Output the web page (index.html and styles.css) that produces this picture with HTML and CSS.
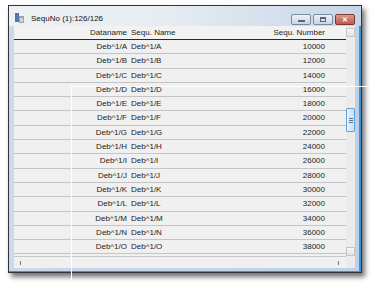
FILE: index.html
```html
<!DOCTYPE html>
<html lang="en">

<head>
    <meta charset="UTF-8">
    <title>SequNo (1):126/126</title>
    <link rel="stylesheet" href="styles.css">
</head>

<body>
    <!-- window -->
    <div class="window">
        <div class="titlebar">
            <svg class="app-icon" width="9" height="10" viewBox="0 0 9 10">
                <rect x="0" y="0" width="4" height="9" fill="#5577aa"/>
                <rect x="4" y="3" width="5" height="7" fill="#9aa3ad"/>
                <rect x="5" y="5" width="3" height="4" fill="#cfd5db"/>
            </svg>
            <span class="title">SequNo (1):126/126</span>
            <div class="buttons">
                <div class="btn btn-min"><span></span></div>
                <div class="btn btn-max"><span></span></div>
                <div class="btn btn-close">&#x2715;</div>
            </div>
        </div>

        <div class="client">
            <div class="main">
                <div class="table">
                    <div class="row head">
                        <div class="c1">Dataname</div>
                        <div class="c2">Sequ. Name</div>
                        <div class="c3">Sequ. Number</div>
                    </div>
                    <div class="row"><div class="c1">Deb^1/A</div><div class="c2">Deb^1/A</div><div class="c3">10000</div></div>
                    <div class="row"><div class="c1">Deb^1/B</div><div class="c2">Deb^1/B</div><div class="c3">12000</div></div>
                    <div class="row"><div class="c1">Deb^1/C</div><div class="c2">Deb^1/C</div><div class="c3">14000</div></div>
                    <div class="row"><div class="c1">Deb^1/D</div><div class="c2">Deb^1/D</div><div class="c3">16000</div></div>
                    <div class="row"><div class="c1">Deb^1/E</div><div class="c2">Deb^1/E</div><div class="c3">18000</div></div>
                    <div class="row"><div class="c1">Deb^1/F</div><div class="c2">Deb^1/F</div><div class="c3">20000</div></div>
                    <div class="row"><div class="c1">Deb^1/G</div><div class="c2">Deb^1/G</div><div class="c3">22000</div></div>
                    <div class="row"><div class="c1">Deb^1/H</div><div class="c2">Deb^1/H</div><div class="c3">24000</div></div>
                    <div class="row"><div class="c1">Deb^1/I</div><div class="c2">Deb^1/I</div><div class="c3">26000</div></div>
                    <div class="row"><div class="c1">Deb^1/J</div><div class="c2">Deb^1/J</div><div class="c3">28000</div></div>
                    <div class="row"><div class="c1">Deb^1/K</div><div class="c2">Deb^1/K</div><div class="c3">30000</div></div>
                    <div class="row"><div class="c1">Deb^1/L</div><div class="c2">Deb^1/L</div><div class="c3">32000</div></div>
                    <div class="row"><div class="c1">Deb^1/M</div><div class="c2">Deb^1/M</div><div class="c3">34000</div></div>
                    <div class="row"><div class="c1">Deb^1/N</div><div class="c2">Deb^1/N</div><div class="c3">36000</div></div>
                    <div class="row"><div class="c1">Deb^1/O</div><div class="c2">Deb^1/O</div><div class="c3">38000</div></div>
                </div>
                <!-- horizontal scrollbar -->
                <div class="hscroll">
                    <span class="tick"></span>
                    <span class="tick"></span>
                </div>
            </div>

            <!-- vertical scrollbar -->
            <div class="vscroll">
                <div class="arrow"></div>
                <div class="track">
                    <div class="thumb"><span></span></div>
                </div>
                <div class="arrow"></div>
                <div class="grip"></div>
            </div>
        </div>
    </div>

    <!-- crosshair over everything -->
    <div class="cross-v"></div>
    <div class="cross-h"></div>
</body>

</html>
```

FILE: styles.css
```css
* {
    margin: 0;
    padding: 0;
    box-sizing: border-box;
}

body {
    background-color: #ffffff;
    font-family: "Liberation Sans", Arial, sans-serif;
    font-size: 8px;
    color: #222;
    position: relative;
    width: 388px;
    height: 288px;
    overflow: hidden;
}

/* outer window */
.window {
    width: 354px;
    height: 268px;
    margin: 5px 0 0 8px;
    border: 1px solid #2c3440;
    background: linear-gradient(to right, #cbd9e9, #bcd1e8);
    box-shadow: inset -2px -1px 0 #3f93d2, 3px 4px 5px rgba(0, 0, 0, 0.55);
    display: flex;
    flex-direction: column;
}

.titlebar {
    height: 20px;
    display: flex;
    align-items: center;
    padding: 0 6px 0 6px;
    background: linear-gradient(to right, #eef1f4 0%, #e6ecf2 45%, #c6d6e8 100%);
}

.app-icon {
    margin-top: 4px;
}

.title {
    margin: 4px 0 0 7px;
    color: #111;
}

.buttons {
    margin-left: auto;
    margin-top: 7px;
    display: flex;
    gap: 2px;
}

.btn {
    width: 20px;
    height: 11px;
    border: 1px solid #7a8a9f;
    border-radius: 2px;
    background: linear-gradient(#eef2f7, #c9d5e3);
    display: flex;
    align-items: center;
    justify-content: center;
}

.btn-min span {
    width: 7px;
    height: 2px;
    margin-top: 3px;
    background-color: #5a6678;
}

.btn-max span {
    width: 6px;
    height: 5px;
    border: 1px solid #5a6678;
    border-top-width: 2px;
}

.btn-close {
    width: 20px;
    border-color: #7a3a34;
    background: linear-gradient(#dd9a8c, #c4584a);
    color: #ffffff;
    font-size: 7px;
    font-weight: bold;
    line-height: 1;
}

/* client area */
.client {
    flex: 1;
    display: flex;
    margin: 0 6px 4px 5px;
    background-color: #f0f0f0;
}

.main {
    flex: 1;
    display: flex;
    flex-direction: column;
}

.table {
    flex: 1;
}

.row {
    display: grid;
    grid-template-columns: 115px 100px 98px 1fr;
    height: 14.3px;
    line-height: 13px;
    border-bottom: 1px solid #c4c4c4;
}

.row.head {
    height: 14px;
    line-height: 13px;
    background-color: #f2f2f2;
    border-bottom: 1px solid #2a2a2a;
}

.c1 {
    text-align: right;
    padding-right: 2px;
}

.c2 {
    padding-left: 2px;
}

.c3 {
    text-align: right;
    padding-right: 2px;
}

/* horizontal scrollbar */
.hscroll {
    height: 12px;
    border-top: 1px solid #c8c8c8;
    display: flex;
    justify-content: space-between;
    align-items: center;
    padding: 0 7px 0 6px;
}

.tick {
    width: 1px;
    height: 4px;
    background-color: #777;
}

/* vertical scrollbar */
.vscroll {
    width: 9px;
    display: flex;
    flex-direction: column;
    background-color: #ebebeb;
}

.arrow {
    height: 9px;
    margin-top: 2px;
    border: 1px solid #c6c6c6;
    background: linear-gradient(#f7f7f7, #e2e2e2);
}

.track {
    flex: 1;
    padding-top: 71px;
}

.thumb {
    height: 24px;
    border: 1px solid #6c9fd1;
    border-radius: 1px;
    background: linear-gradient(to right, #e6f1fb, #c9dff3);
    display: flex;
    align-items: center;
    justify-content: center;
}

.thumb span {
    width: 4px;
    height: 5px;
    border-top: 1px solid #4d79a6;
    border-bottom: 1px solid #4d79a6;
    background: linear-gradient(transparent 40%, #4d79a6 40%, #4d79a6 60%, transparent 60%);
}

.grip {
    height: 12px;
}

/* white crosshair lines */
.cross-v {
    position: absolute;
    left: 71px;
    top: 86px;
    bottom: 0;
    width: 1px;
    background-color: #ffffff;
}

.cross-h {
    position: absolute;
    left: 71px;
    right: 0;
    top: 86px;
    height: 1px;
    background-color: #ffffff;
}
```
